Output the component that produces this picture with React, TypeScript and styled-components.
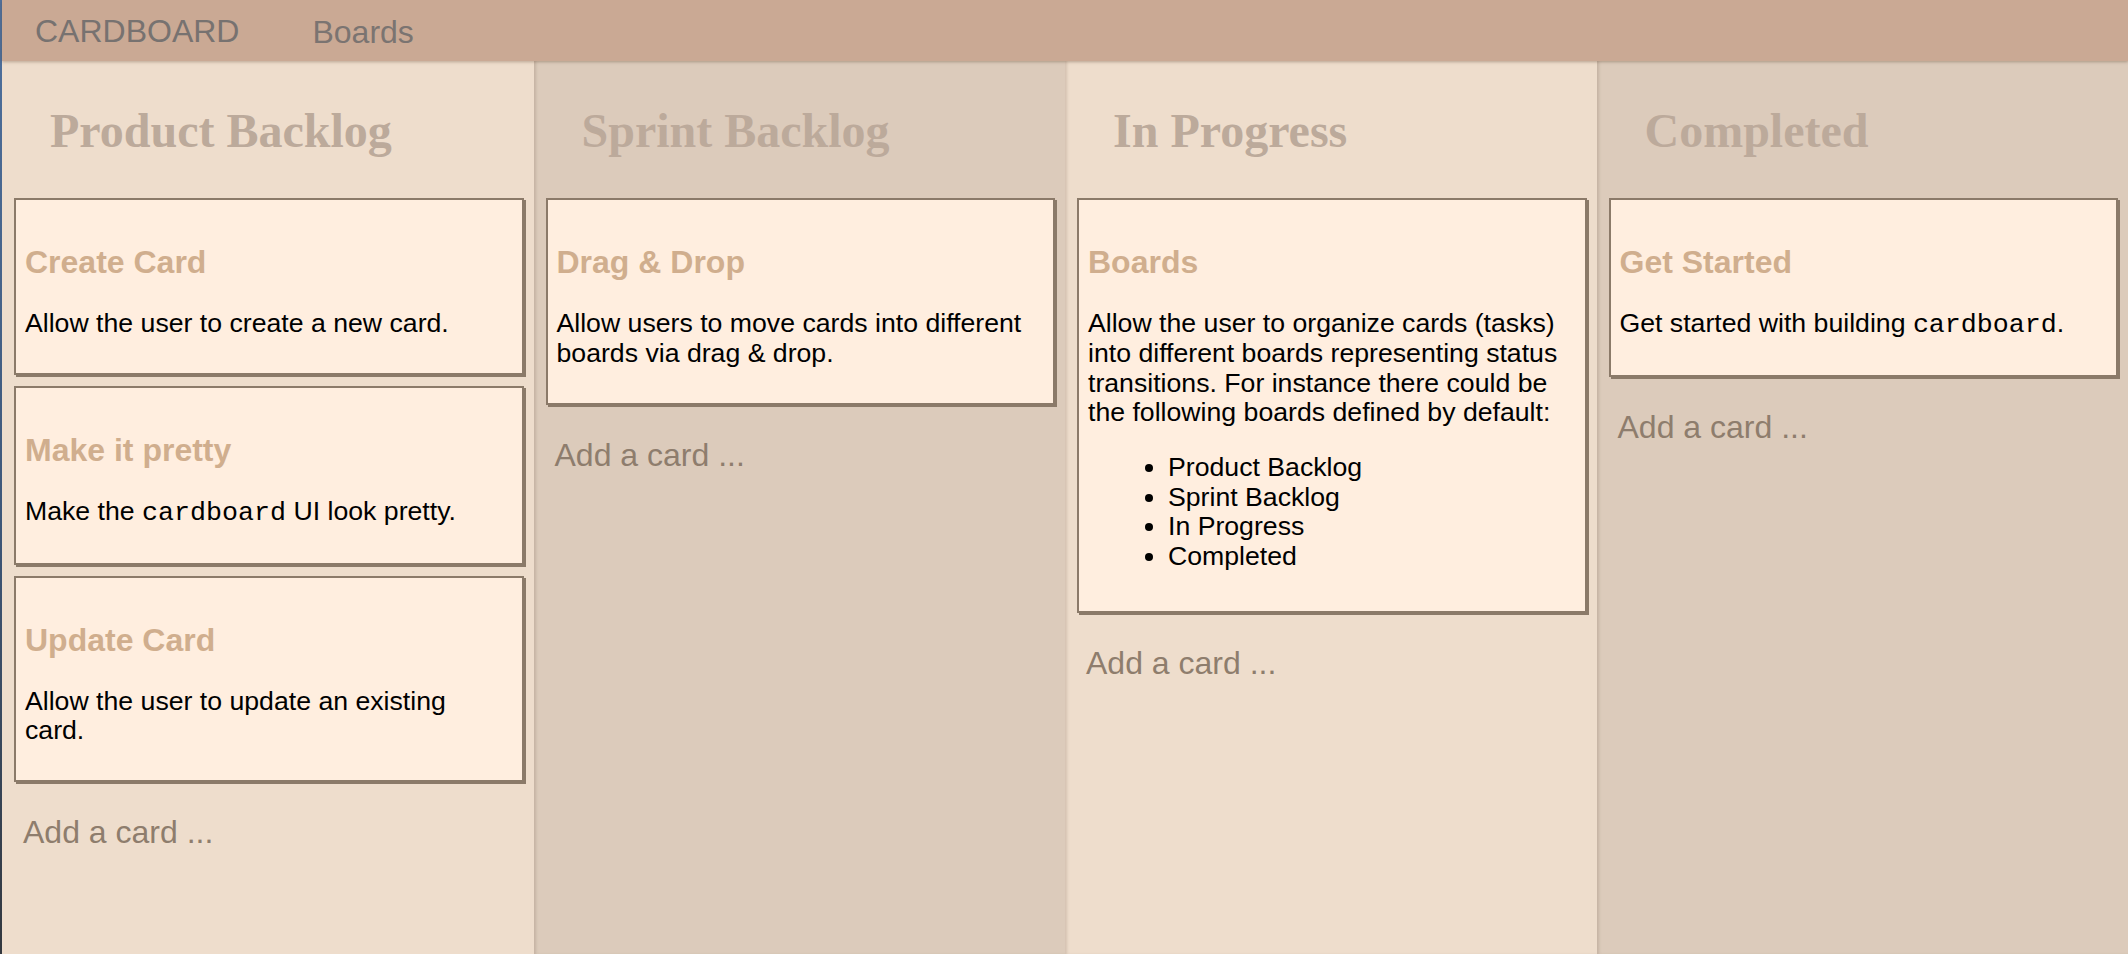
import React from 'react'
import styled, { createGlobalStyle } from 'styled-components'

const GlobalStyle = createGlobalStyle`
  html, body {
    margin: 0;
    padding: 0;
    height: 100%;
  }
  body {
    font-family: "Liberation Sans", Arial, sans-serif;
    background: #eeddcc;
  }
`

const Page = styled.div`
  min-height: 100vh;
  display: flex;
  flex-direction: column;
  border-left: 2px solid #4c6c98;
  border-image: linear-gradient(#4f719e, #3d5678 55%, #33383f) 1;
  box-sizing: border-box;
`

const NavBar = styled.header`
  position: relative;
  z-index: 2;
  display: flex;
  align-items: flex-start;
  height: 61px;
  padding-left: 33px;
  background: #caa994;
  box-shadow: 0 1px 3px rgba(90, 60, 40, 0.35);
`

const Brand = styled.div`
  padding-top: 13px;
  margin-right: 73px;
  font-size: 32px;
  line-height: 37px;
  color: #777270;
`

const NavLink = styled.div`
  padding-top: 14px;
  font-size: 32px;
  line-height: 37px;
  color: #7b7471;
`

const BoardGrid = styled.main`
  flex: 1;
  display: grid;
  grid-template-columns: repeat(4, 1fr);
`

const Column = styled.section<{ $dark: boolean; $first: boolean }>`
  padding: 42px 10px 0 12px;
  background: ${(p) => (p.$dark ? '#dccbbb' : '#eeddcc')};
  box-shadow: ${(p) => (p.$first ? 'none' : 'inset 3px 0 3px -1px rgba(80, 55, 35, 0.16)')};
  min-width: 0;
`

const ColumnTitle = styled.h2`
  margin: 0 0 40px;
  padding-left: 36px;
  font-family: "Liberation Serif", "Times New Roman", serif;
  font-weight: bold;
  font-size: 48px;
  line-height: 55px;
  color: #bcaa9b;
`

const Card = styled.div`
  margin-bottom: 11px;
  padding: 44px 18px 9px 9px;
  background: #ffeedf;
  border: 2px solid #8b7a69;
  box-shadow: 2px 2px 0 #8b7a69;
`

const CardTitle = styled.h4`
  margin: 0 0 28px;
  font-size: 32px;
  line-height: 37px;
  font-weight: bold;
  color: #d0ae8e;
`

const Text = styled.p`
  margin: 0 0 25px;
  font-size: 26.67px;
  line-height: 29.8px;
  color: #000;
`

const Code = styled.code`
  font-family: "Liberation Mono", "Courier New", monospace;
  font-size: 26.67px;
`

const List = styled.ul`
  margin: 27px 0 30px;
  padding-left: 80px;
  font-size: 26.67px;
  line-height: 29.6px;
  color: #000;

  ${Text} + & {
    margin-top: 0;
  }
`

const AddCard = styled.div`
  margin-top: 32px;
  padding-left: 9px;
  font-size: 32px;
  line-height: 37px;
  color: #8e7d6d;
  cursor: pointer;
`

interface CardData {
  title: string
  body: React.ReactNode
}

interface BoardData {
  name: string
  cards: CardData[]
}

const boards: BoardData[] = [
  {
    name: 'Product Backlog',
    cards: [
      { title: 'Create Card', body: <Text>Allow the user to create a new card.</Text> },
      {
        title: 'Make it pretty',
        body: (
          <Text>
            Make the <Code>cardboard</Code> UI look pretty.
          </Text>
        ),
      },
      { title: 'Update Card', body: <Text>Allow the user to update an existing card.</Text> },
    ],
  },
  {
    name: 'Sprint Backlog',
    cards: [
      {
        title: 'Drag & Drop',
        body: <Text>Allow users to move cards into different boards via drag &amp; drop.</Text>,
      },
    ],
  },
  {
    name: 'In Progress',
    cards: [
      {
        title: 'Boards',
        body: (
          <>
            <Text>
              Allow the user to organize cards (tasks) into different boards representing status
              transitions. For instance there could be the following boards defined by default:
            </Text>
            <List>
              <li>Product Backlog</li>
              <li>Sprint Backlog</li>
              <li>In Progress</li>
              <li>Completed</li>
            </List>
          </>
        ),
      },
    ],
  },
  {
    name: 'Completed',
    cards: [
      {
        title: 'Get Started',
        body: (
          <Text>
            Get started with building <Code>cardboard</Code>.
          </Text>
        ),
      },
    ],
  },
]

export default function App() {
  return (
    <Page>
      <GlobalStyle />
      <NavBar>
        <Brand>CARDBOARD</Brand>
        <NavLink>Boards</NavLink>
      </NavBar>
      <BoardGrid>
        {boards.map((board, i) => (
          <Column key={board.name} $dark={i % 2 === 1} $first={i === 0}>
            <ColumnTitle>{board.name}</ColumnTitle>
            {board.cards.map((card) => (
              <Card key={card.title}>
                <CardTitle>{card.title}</CardTitle>
                {card.body}
              </Card>
            ))}
            <AddCard>Add a card ...</AddCard>
          </Column>
        ))}
      </BoardGrid>
    </Page>
  )
}
